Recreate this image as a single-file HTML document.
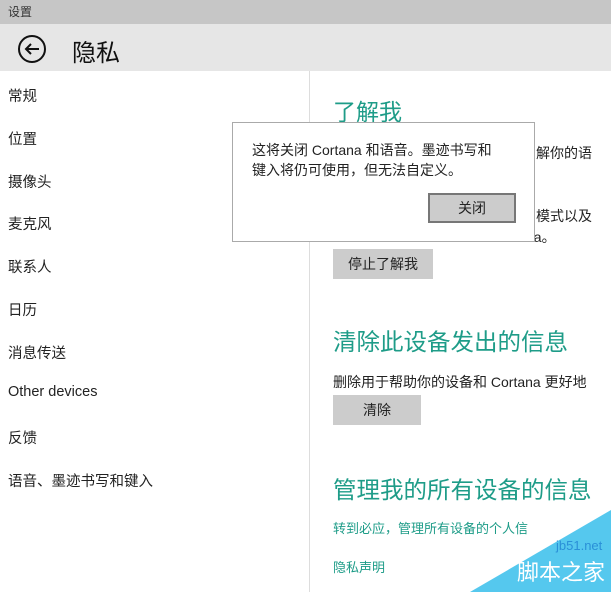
<!DOCTYPE html>
<html><head><meta charset="utf-8"><style>
*{margin:0;padding:0;box-sizing:border-box}
body{width:611px;height:592px;overflow:hidden;background:#fff;font-family:"Liberation Sans","Noto Sans CJK SC",sans-serif;color:#222;position:relative}
.a{position:absolute;white-space:nowrap}
.t{color:#1e9c88}
.s{font-size:14.5px;left:8px}
</style></head><body>
<div class="a" style="left:0;top:0;width:611px;height:24px;background:#c6c6c6"></div>
<div class="a" style="left:8px;top:3px;font-size:12px;color:#333">设置</div>
<div class="a" style="left:0;top:24px;width:611px;height:47px;background:#e6e6e6"></div>
<svg class="a" style="left:17px;top:34px" width="30" height="30" viewBox="0 0 30 30"><circle cx="15" cy="15" r="13" fill="none" stroke="#111" stroke-width="2"/><path d="M22 15H9M14 10l-5 5 5 5" fill="none" stroke="#111" stroke-width="2"/></svg>
<div class="a" style="left:72px;top:33px;font-size:24px;color:#111">隐私</div>
<div class="a" style="left:309px;top:71px;width:1px;height:521px;background:#ddd"></div>
<div class="a s" style="top:85px">常规</div>
<div class="a s" style="top:128px">位置</div>
<div class="a s" style="top:171px">摄像头</div>
<div class="a s" style="top:213px">麦克风</div>
<div class="a s" style="top:256px">联系人</div>
<div class="a s" style="top:299px">日历</div>
<div class="a s" style="top:342px">消息传送</div>
<div class="a s" style="top:384px">Other devices</div>
<div class="a s" style="top:427px">反馈</div>
<div class="a s" style="top:470px">语音、墨迹书写和键入</div>

<div class="a t" style="left:333px;top:93px;font-size:23px">了解我</div>
<div class="a" style="left:536px;top:143px;font-size:14px">解你的语</div>
<div class="a" style="left:536px;top:206px;font-size:14px">模式以及</div>
<div class="a" style="left:526px;top:227px;font-size:14px">na。</div>
<div class="a" style="left:333px;top:249px;width:100px;height:30px;background:#ccc;font-size:14px;text-align:center;line-height:30px">停止了解我</div>
<div class="a t" style="left:333px;top:323px;font-size:23.5px">清除此设备发出的信息</div>
<div class="a" style="left:333px;top:372px;font-size:14px">删除用于帮助你的设备和 Cortana 更好地</div>
<div class="a" style="left:333px;top:395px;width:88px;height:30px;background:#ccc;font-size:14px;text-align:center;line-height:30px">清除</div>
<div class="a t" style="left:333px;top:471px;font-size:23.5px">管理我的所有设备的信息</div>
<div class="a t" style="left:333px;top:518px;font-size:13px">转到必应，管理所有设备的个人信</div>
<div class="a t" style="left:333px;top:557px;font-size:13px">隐私声明</div>
<svg class="a" style="left:470px;top:510px" width="141" height="82"><polygon points="141,0 141,82 0,82" fill="#55c8ee"/></svg>
<div class="a" style="left:556px;top:538px;font-size:13px;color:#2a90d8">jb51.net</div>
<div class="a" style="left:517px;top:555px;font-size:22px;color:#fff">脚本之家</div>

<div class="a" style="left:232px;top:122px;width:303px;height:120px;background:#fff;border:1px solid #aaa"></div>
<div class="a" style="left:252px;top:140px;font-size:14px;line-height:20px">这将关闭 Cortana 和语音。墨迹书写和<br>键入将仍可使用，但无法自定义。</div>
<div class="a" style="left:428px;top:193px;width:88px;height:30px;background:#ccc;border:2px solid #777;font-size:14px;text-align:center;line-height:26px">关闭</div>
</body></html>
